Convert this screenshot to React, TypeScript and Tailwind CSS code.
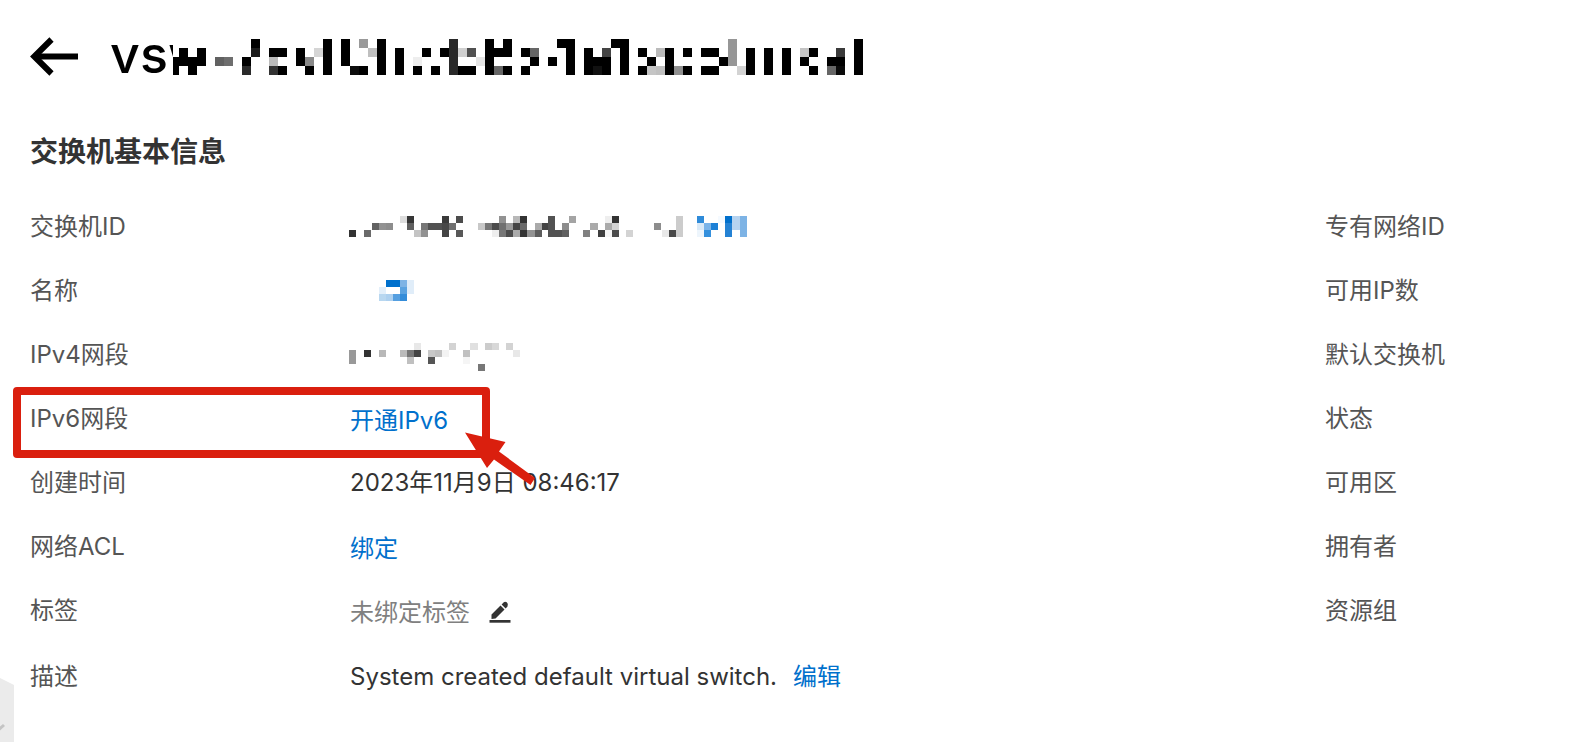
import React from 'react';

type Cell = [x: number, y: number, w: number, h: number, fill: string];

function Mosaic({ cells, unitX = 1, unitY, className, viewBox }: {
  cells: Cell[];
  unitX?: number;
  unitY: number;
  className: string;
  viewBox: string;
}) {
  return (
    <svg aria-hidden="true" className={className} viewBox={viewBox} shapeRendering="crispEdges">
      {cells.map(([x, y, w, h, fill], i) => (
        <rect key={i} x={x * unitX} y={y * unitY} width={w * unitX} height={h * unitY} fill={fill} />
      ))}
    </svg>
  );
}

const K = '#000';

const titleCells: Cell[] = [
  [-1, 2, 1, 2, K], [0, 1, 1, 2, K], [1, 2, 1, 2, K], [2, 1, 1, 2, K],
  [4, 2, 1, 1, '#616161'], [5, 2, 1, 1, '#6e6e6e'],
  [7, 2, 1, 1, K], [7, 3, 1, 1, '#2a2a2a'], [8, 0, 1, 1, K], [8, 1, 1, 1, '#1c1c1c'],
  [10, 1, 2, 1, K], [10, 2, 1, 1, '#bbb'], [10, 3, 1, 1, '#333'], [11, 3, 1, 1, K],
  [13, 1, 1, 2, K], [14, 2, 1, 1, '#888'], [14, 3, 1, 1, K], [15, 1, 1, 1, '#d5d5d5'], [16, 0, 1, 4, K],
  [18, 0, 1, 3, K], [19, 3, 1, 1, '#0d0d0d'], [20, 3, 1, 1, K], [20, 0, 1, 1, '#999'], [21, 1, 1, 1, '#bfbfbf'],
  [22, 0, 1, 4, K], [24, 1, 1, 3, K],
  [26, 2, 1, 1, '#eee'], [26, 3, 1, 1, K], [27, 1, 1, 1, K], [28, 3, 1, 1, K], [29, 1, 1, 1, K],
  [30, 0, 1, 4, '#292929'], [31, 1, 1, 1, '#d0d0d0'], [32, 1, 1, 1, '#505050'], [31, 3, 2, 1, K],
  [33, 2, 1, 1, '#e5e5e5'], [34, 0, 1, 4, K], [35, 1, 1, 1, K], [35, 3, 1, 1, '#666'],
  [36, 0, 1, 2, K], [36, 3, 1, 1, K],
  [38, 1, 1, 1, K], [38, 3, 1, 1, K], [39, 1, 1, 1, '#666'], [39, 2, 1, 1, K],
  [41, 2, 1, 1, K], [42, 0, 1, 1, K], [43, 0, 1, 4, K],
  [45, 1, 1, 3, K], [46, 2, 1, 1, K], [46, 3, 1, 1, '#111'], [47, 1, 1, 1, '#444'], [47, 2, 1, 2, K],
  [48, 0, 1, 1, K], [49, 0, 1, 4, K],
  [51, 1, 1, 1, K], [51, 2, 1, 1, '#fafafa'], [51, 3, 1, 1, K], [52, 2, 1, 1, K], [52, 3, 1, 1, '#c5c5c5'],
  [53, 1, 1, 1, '#bbb'], [53, 3, 1, 1, '#c0c0c0'], [54, 1, 1, 3, K], [55, 3, 1, 1, '#909090'],
  [56, 1, 1, 1, K], [56, 3, 1, 1, K],
  [58, 1, 2, 1, K], [58, 3, 2, 1, K], [60, 2, 1, 1, K], [61, 0, 1, 3, '#969696'], [62, 3, 1, 1, '#d3d3d3'],
  [63, 1, 1, 3, K], [65, 1, 1, 3, K], [67, 1, 1, 3, K],
  [69, 1, 1, 1, '#c4c4c4'], [69, 2, 1, 1, K], [70, 1, 1, 1, K], [70, 3, 1, 1, K],
  [72, 2, 1, 1, K], [72, 3, 1, 1, '#666'], [73, 1, 1, 1, '#3a3a3a'], [73, 2, 1, 1, K], [73, 3, 1, 1, '#0a0a0a'],
  [75, 0, 1, 4, K],
];

const idCells: Cell[] = [
  [9, 2, 7, 1, '#333'], [24, 2, 7, 1, '#6a6a6a'], [32, 1, 7, 1, '#626262'], [39, 1, 7, 1, '#929292'],
  [46, 1, 7, 1, '#8d8d8d'], [60, 0, 7, 1, '#ddd'], [67, 0, 7, 1, '#363636'], [67, 1, 7, 1, '#606060'],
  [74, 2, 7, 1, '#c4c4c4'], [81, 1, 7, 1, '#777'], [81, 2, 7, 1, '#929292'], [88, 1, 14, 1, '#525252'],
  [102, 0, 7, 1, '#3a3a3a'], [102, 1, 7, 1, '#484848'], [102, 2, 7, 1, '#444'], [109, 1, 7, 1, '#707070'],
  [116, 0, 7, 1, '#4c4c4c'], [116, 2, 7, 1, '#585858'],
  [138, 1, 7, 1, '#c8c8c8'], [145, 1, 7, 1, '#777'], [152, 1, 7, 1, '#4c4c4c'], [152, 2, 7, 1, '#eee'],
  [159, 0, 7, 1, '#929292'], [159, 1, 7, 1, '#707070'], [159, 2, 7, 1, '#777'],
  [166, 1, 7, 1, '#999'], [166, 2, 7, 1, '#4c4c4c'],
  [173, 0, 7, 1, '#b8b8b8'], [173, 1, 7, 1, '#444'], [173, 2, 7, 1, '#aaa'],
  [180, 0, 7, 1, '#333'], [180, 1, 7, 1, '#6a6a6a'], [180, 2, 7, 1, '#333'], [187, 2, 8, 1, '#929292'],
  [195, 1, 7, 1, '#aaa'], [195, 2, 7, 1, '#5c5c5c'], [202, 1, 6, 1, '#444'],
  [208, 0, 7, 3, '#525252'], [215, 2, 7, 1, '#525252'], [222, 1, 7, 1, '#8d8d8d'], [222, 2, 7, 1, '#606060'],
  [229, 0, 7, 1, '#a4a4a4'], [243, 2, 7, 1, '#808080'], [250, 1, 8, 1, '#aaa'], [258, 2, 7, 1, '#3f3f3f'],
  [265, 0, 7, 1, '#eee'], [265, 1, 7, 1, '#aaa'], [265, 2, 7, 1, '#f5f5f5'],
  [272, 0, 7, 1, '#333'], [272, 1, 7, 1, '#d3d3d3'], [272, 2, 7, 1, '#4c4c4c'], [286, 2, 7, 1, '#d3d3d3'],
  [314, 1, 7, 1, '#8d8d8d'], [322, 2, 7, 1, '#e8e8e8'], [329, 2, 7, 1, '#484848'], [336, 0, 7, 3, '#ccc'],
  [357, 0, 7, 1, '#2f8bd9'], [357, 1, 7, 1, '#d9e9f7'], [357, 2, 7, 1, '#edf5fc'],
  [364, 1, 7, 1, '#7ab3e8'], [364, 2, 7, 1, '#3490dd'], [371, 1, 7, 1, '#1c80d6'], [378, 0, 7, 1, '#f5faff'],
  [385, 0, 7, 1, '#0070cc'], [385, 1, 7, 2, '#2482d4'], [392, 0, 8, 2, '#b5d3f0'], [400, 0, 7, 3, '#7db3e5'],
];

const nameCells: Cell[] = [
  [46, 0, 14, 1, '#0070cc'], [60, 0, 7, 1, '#7db3e5'], [67, 0, 7, 2, '#e0edf9'],
  [39, 1, 7, 1, '#e3effa'], [39, 2, 7, 1, '#b8d7f0'], [46, 2, 7, 1, '#add0ef'], [53, 2, 7, 1, '#559fe0'],
  [60, 1, 7, 1, '#5aa2e0'], [60, 2, 7, 1, '#338cd9'],
];

const ipv4Cells: Cell[] = [
  [9, 1, 7, 2, '#999'], [24, 1, 7, 1, '#333'], [39, 1, 7, 1, '#b8b8b8'], [60, 1, 7, 1, '#bbb'],
  [67, 1, 7, 1, '#777'], [67, 2, 7, 1, '#c0c0c0'], [74, 0, 7, 1, '#e8e8e8'], [74, 1, 7, 1, '#444'],
  [88, 1, 7, 1, '#c8c8c8'], [88, 2, 7, 1, '#555'], [95, 1, 7, 1, '#c0c0c0'], [102, 1, 7, 1, '#f3f3f3'],
  [109, 0, 7, 1, '#d3d3d3'], [123, 1, 7, 1, '#c0c0c0'], [123, 2, 7, 1, '#f5f5f5'], [130, 0, 8, 1, '#e0e0e0'],
  [138, 3, 7, 1, '#777'], [145, 0, 7, 1, '#ccc'], [152, 0, 7, 1, '#d8d8d8'], [166, 0, 7, 1, '#d3d3d3'],
  [173, 1, 7, 1, '#e8e8e8'],
];

function Row({ label, children }: { label: string; children?: React.ReactNode }) {
  return (
    <div className="flex h-16 items-center">
      <dt className="w-80 shrink-0 text-[#555]">{label}</dt>
      <dd className="flex min-w-0 items-center whitespace-nowrap text-[#333]">{children}</dd>
    </div>
  );
}

const link = 'text-[#0070cc] hover:underline';

const networkFields = ['专有网络ID', '可用IP数', '默认交换机', '状态', '可用区', '拥有者', '资源组'];

export default function App() {
  return (
    <div className="relative min-h-screen overflow-hidden bg-white pl-[30px] font-['Inter','Noto_Sans_CJK_SC',sans-serif]">
      <header className="flex h-[114px] items-center gap-8">
        <button type="button" aria-label="返回" className="h-10 w-12 shrink-0">
          <svg viewBox="0 0 48 40" className="h-10 w-12" fill="none" stroke="#000" strokeWidth="6">
            <path d="M48 19.5H5" />
            <path d="M21.5 2.5L4.3 19.5L21.5 36.5" />
          </svg>
        </button>
        <h1 className="relative pb-1 text-[52px] leading-[60px] font-medium text-black">
          vsw
          <span className="absolute top-[14px] left-[63px] h-10 w-[700px] bg-white">
            <Mosaic cells={titleCells} unitX={9} unitY={9} viewBox="-6 0 700 36" className="h-9 w-[700px]" />
          </span>
        </h1>
      </header>

      <main>
        <h2 className="flex h-[81px] items-center pb-1.5 text-[28px] font-bold text-[#333]">交换机基本信息</h2>
        <div className="flex justify-between text-2xl">
          <dl className="min-w-0">
            <Row label="交换机ID">
              <Mosaic cells={idCells} unitY={7} viewBox="10 1 400 21" className="h-[21px] w-[400px] overflow-visible" />
            </Row>
            <Row label="名称">
              <Mosaic cells={nameCells} unitY={7} viewBox="10 1 400 21" className="h-[21px] w-[400px] overflow-visible" />
            </Row>
            <Row label="IPv4网段">
              <Mosaic cells={ipv4Cells} unitY={7} viewBox="10 -2 400 28" className="h-7 w-[400px] overflow-visible" />
            </Row>
            <div className="relative">
              <Row label="IPv6网段">
                <a href="#ipv6" className={`pt-1 ${link}`}>开通IPv6</a>
              </Row>
              <div className="pointer-events-none absolute top-0 -left-[17px] z-10 h-[71px] w-[477px] rounded-[4px] border-8 border-[#da1f0e]" />
              <svg aria-hidden="true" viewBox="0 0 72 54" className="pointer-events-none absolute top-[45px] left-[434px] z-10 h-[54px] w-[72px]" fill="#da1f0e">
                <path d="M1 0.5L41.5 10L35 19.5L71 46L66.5 53L30 27.5L23 36Z" />
              </svg>
            </div>
            <Row label="创建时间">2023年11月9日 08:46:17</Row>
            <Row label="网络ACL">
              <a href="#acl" className={`pt-1 ${link}`}>绑定</a>
            </Row>
            <Row label="标签">
              <span className="pt-1 text-[#808080]">未绑定标签</span>
              <button type="button" aria-label="编辑标签" className="ml-[18px] pt-0.5">
                <svg viewBox="0 0 24 24" className="h-6 w-6" fill="#333">
                  <path d="M3.5 19V14.5L12.5 5.5L16.5 9.5L7.5 18.5ZM13.6 4.4L15.5 2.5Q17 1 18.8 2.3Q20.8 4.2 19.5 6.5L17.6 8.4Z" />
                  <path d="M1.5 20H22.5V22.7H1.5Z" />
                </svg>
              </button>
            </Row>
            <div className="pt-0.5">
              <Row label="描述">
                <span>System created default virtual switch.</span>
                <a href="#edit" className={`ml-4 ${link}`}>编辑</a>
              </Row>
            </div>
          </dl>
          <dl className="w-[247px] shrink-0 text-[#555]">
            {networkFields.map((name) => (
              <div key={name} className="flex h-16 items-center">
                <dt>{name}</dt>
              </div>
            ))}
          </dl>
        </div>
      </main>

      <button type="button" aria-label="收起" className="absolute bottom-0 left-0 h-16 w-[14px]">
        <svg viewBox="0 0 14 64" className="h-16 w-[14px]">
          <path d="M0 0L14 7V64H0Z" fill="#ebebeb" />
          <path d="M4 47L-6 56" stroke="#c4c4c4" strokeWidth="3" />
        </svg>
      </button>
    </div>
  );
}
